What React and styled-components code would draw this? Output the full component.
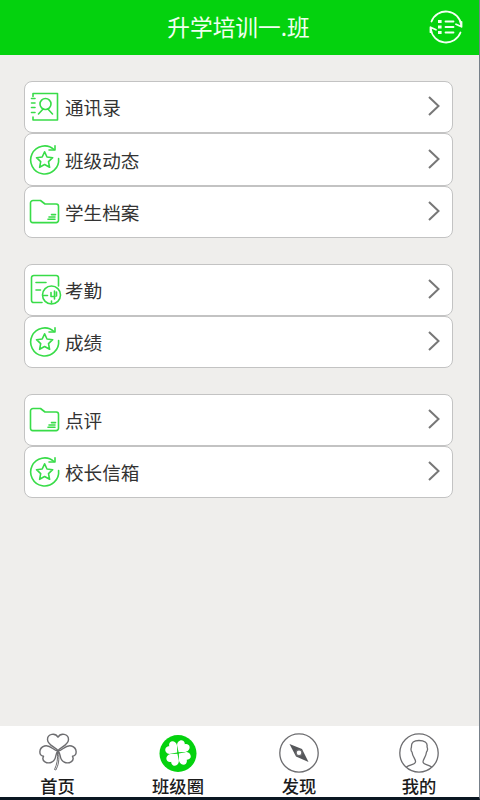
import React from "react";
import styled, { createGlobalStyle } from "styled-components";

const GlobalStyle = createGlobalStyle`
  * { box-sizing: border-box; }
  body {
    margin: 0;
    font-family: "Noto Sans CJK SC", sans-serif;
  }
`;

const Screen = styled.div`
  display: flex;
  flex-direction: column;
  width: 480px;
  height: 800px;
  overflow: hidden;
  background: #efeeec;
  border-right: 1px solid #77808a;
  border-bottom: 3px solid #0b1722;
`;

const Header = styled.header`
  display: grid;
  grid-template-columns: 60px 1fr 60px;
  align-items: center;
  flex: none;
  height: 55px;
  margin-right: -1px;
  background: #04d20e;
  color: #f1fff0;
`;

const Title = styled.h1`
  grid-column: 2;
  margin: 0;
  padding: 0 3px 2px 0;
  font-size: 22.7px;
  font-weight: 400;
  line-height: 30px;
  text-align: center;
  white-space: nowrap;
`;

const MenuButton = styled.button`
  display: flex;
  justify-content: center;
  padding: 0 8px 2px 0;
  border: 0;
  background: none;
  color: #f4fff4;
`;

const Content = styled.main`
  display: flex;
  flex: 1;
  flex-direction: column;
  gap: 26px;
  padding: 26.4px 26px 0 24px;
`;

const Group = styled.section`
  display: flex;
  flex-direction: column;
`;

const Row = styled.div`
  display: flex;
  align-items: center;
  height: 52.1px;
  padding: 0 12px 0 4px;
  border: 1px solid #c3c3c3;
  border-radius: 8px;
  background: #fff;
`;

const RowLabel = styled.span`
  flex: 1;
  padding: 0 0 0 4px;
  color: #333;
  font-size: 18.6px;
  line-height: 28px;
`;

const Icon = styled.svg`
  display: block;
  flex: none;
  overflow: visible;
  fill: none;
  stroke: currentColor;
  stroke-width: ${(p) => p.$weight || 1.6};
  stroke-linecap: round;
  stroke-linejoin: round;
`;

const RowIcon = styled(Icon)`
  color: #38dc48;
`;

const Chevron = styled(Icon)`
  margin-bottom: 2px;
  color: #777;
  stroke-linecap: butt;
  stroke-linejoin: miter;
`;

const TabBar = styled.nav`
  display: grid;
  grid-template-columns: 115px 126px 116px 124px;
  flex: none;
  height: 71px;
  background: #fff;
`;

const Tab = styled.div`
  display: flex;
  flex-direction: column;
  align-items: center;
  padding-top: 7px;
  color: #6d6d70;
`;

const TabLabel = styled.span`
  margin-top: 1px;
  color: #1b1b1b;
  font-size: 17.3px;
  font-weight: 500;
  line-height: 24px;
`;

function ContactsIcon() {
  return (
    <RowIcon width="32" height="32" viewBox="0 0 32 32">
      <path d="M4 5.5V2.5H28.5V29H4v-3" />
      <path d="M2.5 7.5H6M2.5 12H6M2.5 16.5H6M2.5 21.5H6" />
      <circle cx="16.500" cy="13" r="5.500" />
      <path d="M9.500 23l4.600-5M23.500 23l-4.600-5" />
    </RowIcon>
  );
}

function StarIcon() {
  return (
    <RowIcon width="32" height="32" viewBox="0 0 32 32">
      <path d="M25 5.500A14 14 0 1 0 29.600 14.500" />
      <path d="M20 6h6V1.800" />
      <path d="M15.600 7.800l2.400 5.200 5.700.700-4.200 3.900 1.100 5.700-5-2.800-5 2.800 1.100-5.700-4.200-3.900 5.700-.700z" />
    </RowIcon>
  );
}

function FolderIcon() {
  return (
    <RowIcon width="32" height="32" viewBox="0 0 32 32">
      <path d="M1.500 7a2.500 2.500 0 0 1 2.500-2.500h7.500L16 8h11.300A2.300 2.300 0 0 1 29.500 10.300v14a2.300 2.300 0 0 1-2.300 2.300H3.800A2.300 2.300 0 0 1 1.500 24.300z" />
      <path d="M22.500 18.600h4M20 21h6M19 23.300h7" />
    </RowIcon>
  );
}

function AttendanceIcon() {
  return (
    <RowIcon width="32" height="32" viewBox="0 0 32 32">
      <path d="M13 28.500H4.800A2.300 2.300 0 0 1 2.500 26.200V3.800A2.300 2.300 0 0 1 4.800 1.500h22.400A2.300 2.300 0 0 1 29.500 3.800V12" />
      <path d="M7 8.500H17M7 16H11.500" />
      <circle cx="22.500" cy="21" r="9" />
      <path d="M14.500 21.500h4M22 18.500v4h4M22.500 27v2M25.500 17v8M27.500 18v4" />
    </RowIcon>
  );
}

function SyncListIcon() {
  return (
    <Icon width="34" height="34" viewBox="0 0 34 34" $weight={1.8}>
      <path d="M2.500 11.500A15.400 15.400 0 0 1 32.200 15M31.500 22.500A15.400 15.400 0 0 1 1.800 19" />
      <path d="M27 14.300l5.500 2.500v-5M7 19.700L1.500 17.200v5" />
      <path d="M16.500 11.500H24.500M16.500 17H24.500M16.500 22.500H24.500" />
      <path d="M10.500 11.500h.600M10.500 17h.600M10.500 22.500h.600" strokeWidth="3" strokeLinecap="square" />
    </Icon>
  );
}

function ShamrockIcon() {
  return (
    <Icon width="40" height="40" viewBox="0 0 40 40" $weight={1.4}>
      <path d="M20 18C18 14 9.500 12.500 9.500 6.500C9.500.500 17.500-.500 20 4.200C22.500-.500 30.500.500 30.500 6.500C30.500 12.500 22 14 20 18Z" />
      <path d="M20 18C15.500 18 12.500 11 6.500 13C.500 15 .500 22.500 5.500 23.300C3 28 9 31.500 14 29C19.500 26 16.500 20.500 20 18Z" />
      <path d="M20 18C24.500 18 27.500 11 33.500 13C39.500 15 39.500 22.500 34.500 23.300C37 28 31 31.500 26 29C20.500 26 23.500 20.500 20 18Z" />
      <path d="M19.500 19C20 26 19 31.500 16.500 36.500L17.800 37C20.500 32 21.500 27 20.500 19" strokeWidth="1" />
    </Icon>
  );
}

const LEAF = "M0-1L-5.200-5.300C-8-8-6.500-12.600-3.500-12.800C-1.800-12.900-.600-12 0-11C.600-12 1.800-12.900 3.500-12.800C6.500-12.600 8-8 5.200-5.300Z";

function CloverIcon() {
  return (
    <Icon width="40" height="40" viewBox="0 0 40 40">
      <circle cx="20" cy="20.500" r="18.500" fill="#04d20e" stroke="none" />
      <g transform="translate(20 20)" fill="#fff" stroke="none">
        {[-52, 38, 128, 218].map((angle) => (
          <path key={angle} d={LEAF} transform={`rotate(${angle})`} />
        ))}
      </g>
    </Icon>
  );
}

function CompassIcon() {
  return (
    <Icon width="40" height="40" viewBox="0 0 40 40" $weight={1.3}>
      <circle cx="20" cy="20" r="19.200" />
      <path fill="#55575a" stroke="none" d="M10.500 11L23 16L29.500 29L17 23.500Z" />
      <circle cx="20" cy="19.800" r="2.900" fill="#fff" />
    </Icon>
  );
}

function ProfileIcon() {
  return (
    <Icon width="40" height="40" viewBox="0 0 40 40" $weight={1.3}>
      <circle cx="20" cy="20" r="19.200" />
      <path d="M7.500 34C11 31.500 16 32 16.500 29C17 26 13.500 24 13 19C11.500 18 12 15 12.500 14C12 9.500 15 7.500 20 7.500C25 7.500 29 9.500 28 14C29 15.500 28.500 18 27.500 19C27 24 24 26 24 29C24.500 32 29 31.500 32.500 34" />
    </Icon>
  );
}

const GROUPS = [
  [
    { label: "通讯录", Glyph: ContactsIcon },
    { label: "班级动态", Glyph: StarIcon },
    { label: "学生档案", Glyph: FolderIcon },
  ],
  [
    { label: "考勤", Glyph: AttendanceIcon },
    { label: "成绩", Glyph: StarIcon },
  ],
  [
    { label: "点评", Glyph: FolderIcon },
    { label: "校长信箱", Glyph: StarIcon },
  ],
];

const TABS = [
  { label: "首页", Glyph: ShamrockIcon },
  { label: "班级圈", Glyph: CloverIcon },
  { label: "发现", Glyph: CompassIcon },
  { label: "我的", Glyph: ProfileIcon },
];

export default function App() {
  return (
    <>
      <GlobalStyle />
      <Screen>
        <Header>
          <Title>升学培训一.班</Title>
          <MenuButton>
            <SyncListIcon />
          </MenuButton>
        </Header>
        <Content>
          {GROUPS.map((rows) => (
            <Group key={rows[0].label}>
              {rows.map(({ label, Glyph }) => (
                <Row key={label}>
                  <Glyph />
                  <RowLabel>{label}</RowLabel>
                  <Chevron width="12" height="20" viewBox="0 0 12 20" $weight={2}>
                    <path d="M1 1l9.500 9L1 19" />
                  </Chevron>
                </Row>
              ))}
            </Group>
          ))}
        </Content>
        <TabBar>
          {TABS.map(({ label, Glyph }) => (
            <Tab key={label}>
              <Glyph />
              <TabLabel>{label}</TabLabel>
            </Tab>
          ))}
        </TabBar>
      </Screen>
    </>
  );
}
